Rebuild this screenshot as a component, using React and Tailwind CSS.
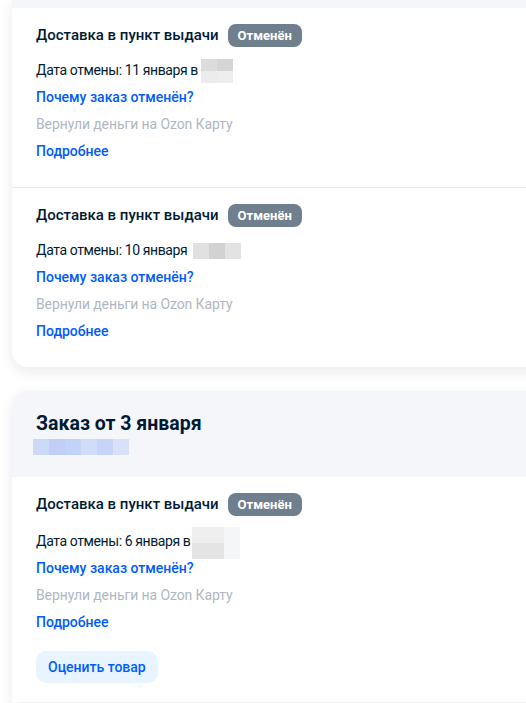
import React from 'react';

const FONT = { fontFamily: 'Roboto, "Noto Sans", Arial, sans-serif' };

// пикселизованные "замазки" как на скриншоте
const Mosaic = ({ cells, cellW = 16, cellH = 16, className = '' }) => (
  <span className={`inline-flex flex-col align-middle ${className}`}>
    {cells.map((row, r) => (
      <span key={r} className="flex">
        {row.map((c, i) => (
          <span key={i} style={{ background: c, width: cellW, height: cellH }} />
        ))}
      </span>
    ))}
  </span>
);

const Shipment = ({ date, blur, withButton, divider, gap = 'mt-[10px]' }) => (
  <div className={`px-6 pt-4 ${withButton ? 'pb-[19px]' : 'pb-[22px]'} ${divider ? 'border-b border-[#e6eaf0]' : ''}`}>
    <div className="flex items-center gap-[9px]">
      <span className="text-[15px] font-medium text-[#001a34]">Доставка в пункт выдачи</span>
      <span className="h-[23px] px-[10px] rounded-lg bg-[#707f8d] text-white text-[13px] font-bold leading-[23px]">Отменён</span>
    </div>
    <div className={`${gap} text-[14px] leading-[27px]`}>
      <div className="flex items-center text-[#001a34] h-[27px]">
        <span className="tracking-[-0.4px]">Дата отмены: {date}</span>
        {blur}
      </div>
      <div className="text-[#005bff] font-medium">Почему заказ отменён?</div>
      <div className="text-[#b0b7bf] tracking-[-0.1px]">Вернули деньги на Ozon Карту</div>
      <div className="text-[#005bff] font-medium">Подробнее</div>
    </div>
    {withButton && (
      <button className="mt-[15px] h-8 px-3 rounded-[10px] bg-[#e8f4ff] text-[#005bff] text-[14px] font-medium">
        Оценить товар
      </button>
    )}
  </div>
);

export default function App() {
  return (
    <div className="min-h-screen bg-white overflow-hidden" style={FONT}>
      <div className="pl-3 w-[570px]">
        {/* первый заказ (шапка ушла вверх) */}
        <div className="bg-white rounded-b-2xl shadow-[0_4px_14px_rgba(0,26,52,0.09)] overflow-hidden">
          <div className="h-2 bg-[#f5f6fa]" />
          <Shipment
            date="11 января в"
            divider
            blur={
              <Mosaic
                className="ml-[3px] mt-[1px]"
                cellH={12}
                cells={[
                  ['#dcdcdc', '#d5d5d5'],
                  ['#ececec', '#eeeeee'],
                ]}
              />
            }
          />
          <Shipment
            date="10 января"
            blur={
              <Mosaic
                className="ml-[6px]"
                cells={[['#e1e1e1', '#d2d2d2', '#e3e3e3']]}
              />
            }
          />
        </div>

        {/* заказ от 3 января */}
        <div className="mt-6 bg-white rounded-t-2xl shadow-[0_4px_14px_rgba(0,26,52,0.09)] overflow-hidden">
          <div className="bg-[#f5f6fa] pl-6 pt-[21px] pb-[22px]">
            <div className="text-[19.5px] font-bold text-[#001a34] leading-6">Заказ от 3 января</div>
            <div className="flex mt-[3px] ml-[-3px]">
              <Mosaic cells={[['#cdd9f8', '#c0cff6', '#c3d2f7', '#d1dcf8', '#c5d4f7', '#d7e1f9']]} />
            </div>
          </div>
          <Shipment
            date="6 января в"
            withButton
            gap="mt-[12px]"
            blur={
              <Mosaic
                className="ml-[2px] mt-[2px]"
                cells={[
                  ['#efefef', '#efefef', '#f4f6f8'],
                  ['#e4e4e4', '#e4e4e4', '#f4f6f8'],
                ]}
              />
            }
          />
        </div>
      </div>
    </div>
  );
}
